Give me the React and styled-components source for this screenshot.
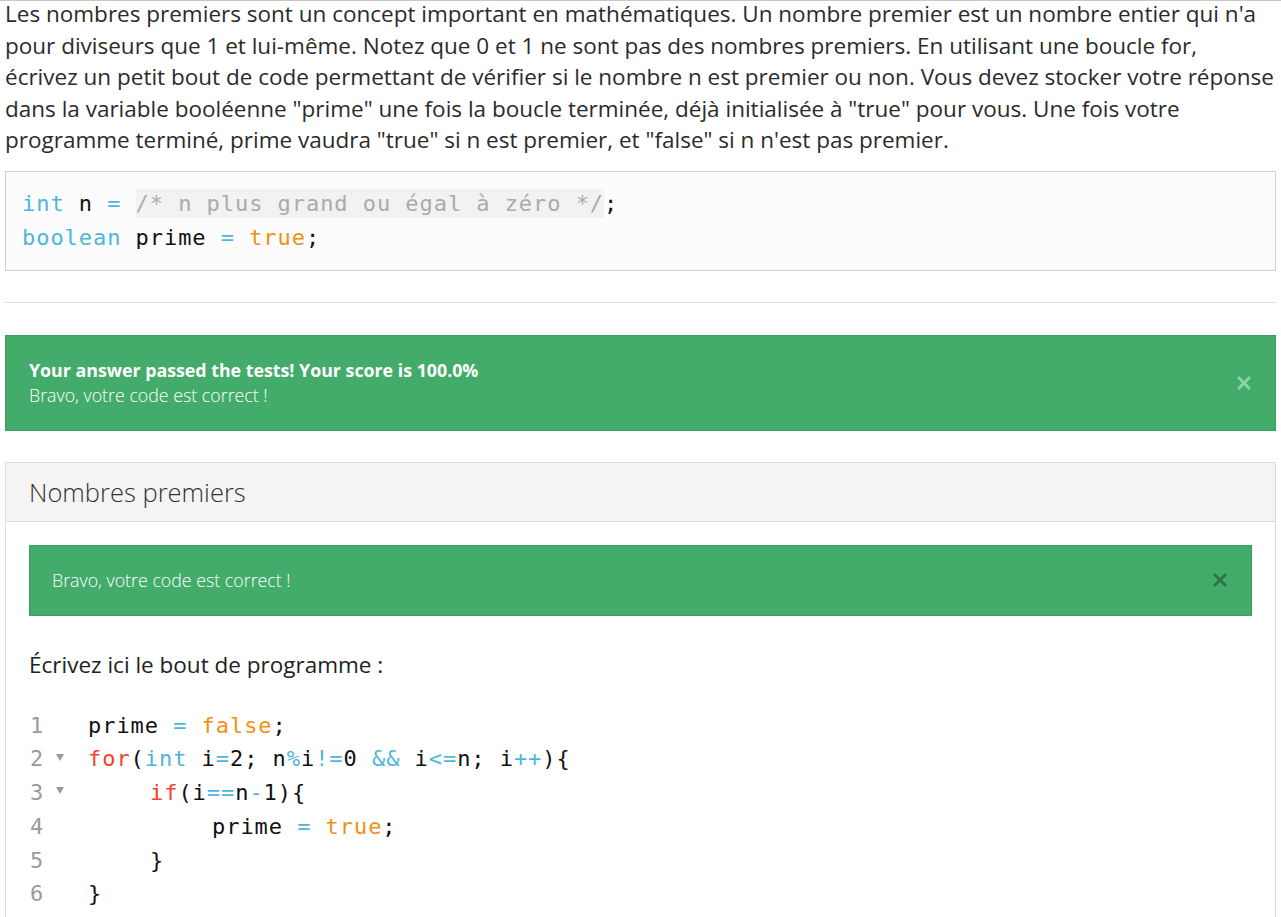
import React from 'react';
import styled, { createGlobalStyle } from 'styled-components';

const GlobalStyle = createGlobalStyle`
  html, body {
    margin: 0;
    padding: 0;
    background: #fff;
  }
  body {
    font-family: 'Open Sans', 'Liberation Sans', sans-serif;
    color: #333;
    overflow: hidden;
  }
`;

const Page = styled.div`
  border-top: 1px solid #c8c8c8;
  padding: 0 5px;
`;

const Intro = styled.p`
  margin: -3px 0 0;
  font-size: 22.5px;
  line-height: 31.5px;
  color: #2b2b2b;
`;

const CodeBox = styled.pre`
  margin: 15px 0 0;
  padding: 15px 16px;
  background: #fcfcfc;
  border: 1px solid #cfcfcf;
  font-family: 'DejaVu Sans Mono', 'Liberation Mono', monospace;
  font-size: 22px;
  letter-spacing: 0.95px;
  line-height: 34px;
  color: #111;
`;

const Tok = styled.span`
  color: ${(p) => p.$c};
`;

const Comment = styled.span`
  color: #ababab;
  background: #f2f2f2;
  padding: 2px 0;
`;

const Rule = styled.hr`
  margin: 31px 0 0;
  border: 0;
  border-top: 1px solid #dcdcdc;
`;

const Alert = styled.div`
  display: flex;
  align-items: center;
  justify-content: space-between;
  background: #43ac6a;
  border: 1px solid #3a9d5e;
  color: #fff;
  font-size: 17.8px;
  line-height: 25px;
  padding: ${(p) => p.$pad};
  margin-top: ${(p) => p.$mt || 0};
`;

const AlertText = styled.div`
  display: flex;
  flex-direction: column;
`;

const Strong = styled.span`
  font-weight: 700;
`;

const Light = styled.span`
  font-weight: 300;
`;

const Close = styled.span`
  display: flex;
  width: 14px;
  height: 14px;
  color: ${(p) => p.$c};
`;

const Panel = styled.div`
  margin-top: 31px;
  border: 1px solid #dcdcdc;
`;

const PanelHead = styled.div`
  background: #f4f4f4;
  border-bottom: 1px solid #dcdcdc;
  padding: 0 23px;
  height: 58px;
  display: flex;
  align-items: center;
  font-size: 25.5px;
  font-weight: 300;
  color: #333;
`;

const PanelBody = styled.div`
  padding: 23px 23px 40px;
`;

const Label = styled.div`
  margin-top: 33px;
  font-size: 22.5px;
  line-height: 31px;
  color: #222;
`;

const Editor = styled.div`
  margin-top: 29px;
  font-family: 'DejaVu Sans Mono', 'Liberation Mono', monospace;
  font-size: 22px;
  line-height: 33.8px;
  color: #111;
`;

const Row = styled.div`
  display: flex;
  white-space: pre;
`;

const Gutter = styled.div`
  flex: 0 0 59px;
  display: flex;
  align-items: center;
  color: #9a9a9a;
  padding-left: 1px;
  box-sizing: border-box;
`;

const Num = styled.span`
  width: 26px;
`;

const Fold = styled.span`
  width: 0;
  height: 0;
  border-left: 4px solid transparent;
  border-right: 4px solid transparent;
  border-top: 7px solid #9a9a9a;
  margin-top: -4px;
`;

const Line = styled.div`
  letter-spacing: 0.95px;
  padding-left: ${(p) => p.$indent * 62}px;
`;

const BLUE = '#4fb6db';
const ORANGE = '#ef9213';
const RED = '#f0442c';

const XIcon = ({ color }) => (
  <Close $c={color}>
    <svg width="14" height="14" viewBox="0 0 14 14">
      <path d="M2 2 L12 12 M12 2 L2 12" stroke="currentColor" strokeWidth="3" strokeLinecap="square" />
    </svg>
  </Close>
);

const editorLines = [
  { indent: 0, tokens: [['prime '], ['=', BLUE], [' '], ['false', ORANGE], [';']] },
  {
    indent: 0,
    fold: true,
    tokens: [
      ['for', RED], ['('], ['int', BLUE], [' i'], ['=', BLUE], ['2; n'], ['%', BLUE], ['i'],
      ['!=', BLUE], ['0 '], ['&&', BLUE], [' i'], ['<=', BLUE], ['n; i'], ['++', BLUE], ['){'],
    ],
  },
  { indent: 1, fold: true, tokens: [['if', RED], ['(i'], ['==', BLUE], ['n'], ['-', BLUE], ['1){']] },
  { indent: 2, tokens: [['prime '], ['=', BLUE], [' '], ['true', ORANGE], [';']] },
  { indent: 1, tokens: [['}']] },
  { indent: 0, tokens: [['}']] },
];

const App = () => {
  return (
    <Page>
      <GlobalStyle />
      <Intro>
        Les nombres premiers sont un concept important en mathématiques. Un nombre premier est un nombre entier qui n'a
        pour diviseurs que 1 et lui-même. Notez que 0 et 1 ne sont pas des nombres premiers. En utilisant une boucle for,
        <br />
        écrivez un petit bout de code permettant de vérifier si le nombre n est premier ou non. Vous devez stocker votre
        réponse
        <br />
        dans la variable booléenne "prime" une fois la boucle terminée, déjà initialisée à "true" pour vous. Une fois votre
        <br />
        programme terminé, prime vaudra "true" si n est premier, et "false" si n n'est pas premier.
      </Intro>

      <CodeBox>
        <Tok $c={BLUE}>int</Tok> n <Tok $c={BLUE}>=</Tok> <Comment>/* n plus grand ou égal à zéro */</Comment>;
        {'\n'}
        <Tok $c={BLUE}>boolean</Tok> prime <Tok $c={BLUE}>=</Tok> <Tok $c={ORANGE}>true</Tok>;
      </CodeBox>

      <Rule />

      <Alert $pad="22px 24px 22px 23px" $mt="32px">
        <AlertText>
          <Strong>Your answer passed the tests! Your score is 100.0%</Strong>
          <Light>Bravo, votre code est correct !</Light>
        </AlertText>
        <XIcon color="#8ed2a7" />
      </Alert>

      <Panel>
        <PanelHead>Nombres premiers</PanelHead>
        <PanelBody>
          <Alert $pad="22px 24px 22px 22px">
            <Light>Bravo, votre code est correct !</Light>
            <XIcon color="#2f7548" />
          </Alert>

          <Label>Écrivez ici le bout de programme :</Label>

          <Editor>
            {editorLines.map((line, i) => (
              <Row key={i}>
                <Gutter>
                  <Num>{i + 1}</Num>
                  {line.fold && <Fold />}
                </Gutter>
                <Line $indent={line.indent}>
                  {line.tokens.map(([text, color], j) =>
                    color ? (
                      <Tok key={j} $c={color}>
                        {text}
                      </Tok>
                    ) : (
                      <React.Fragment key={j}>{text}</React.Fragment>
                    )
                  )}
                </Line>
              </Row>
            ))}
          </Editor>
        </PanelBody>
      </Panel>
    </Page>
  );
};

export default App;
